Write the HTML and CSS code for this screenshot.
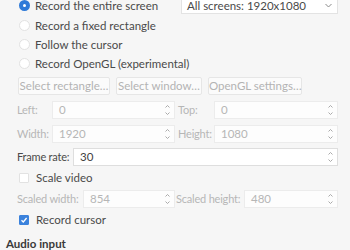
FILE: index.html
```html
<!DOCTYPE html>
<html lang="en">
<head>
    <meta charset="UTF-8">
    <meta name="viewport" content="width=device-width, initial-scale=1.0">
    <title>Video input</title>
    <link rel="stylesheet" href="styles.css">
</head>
<body>
    <div class="page">
        <div class="mode">
            <div class="radios">
                <label class="radio checked"><span class="mark"></span>Record the entire screen</label>
                <label class="radio"><span class="mark"></span>Record a fixed rectangle</label>
                <label class="radio"><span class="mark"></span>Follow the cursor</label>
                <label class="radio"><span class="mark"></span>Record OpenGL (experimental)</label>
            </div>
            <div class="combo">
                <span>All screens: 1920x1080</span>
                <svg width="7" height="5" viewBox="0 0 7 5"><path d="M0.5 1 L3.5 4 L6.5 1" fill="none" stroke="#8a8a8a" stroke-width="1"/></svg>
            </div>
        </div>

        <div class="buttons">
            <button class="btn btn-rect" disabled>Select rectangle…</button>
            <button class="btn btn-win" disabled>Select window…</button>
            <button class="btn btn-gl" disabled>OpenGL settings…</button>
        </div>

        <div class="geom">
            <span class="lbl off">Left:</span>
            <div class="spin off"><span>0</span><i class="arrows"></i></div>
            <span class="lbl off">Top:</span>
            <div class="spin off"><span>0</span><i class="arrows"></i></div>
        </div>
        <div class="geom">
            <span class="lbl off">Width:</span>
            <div class="spin off"><span>1920</span><i class="arrows"></i></div>
            <span class="lbl off">Height:</span>
            <div class="spin off"><span>1080</span><i class="arrows"></i></div>
        </div>

        <div class="framerate">
            <span class="lbl">Frame rate:</span>
            <div class="spin on"><span>30</span><i class="arrows"></i></div>
        </div>

        <label class="check"><span class="box"></span>Scale video</label>

        <div class="geom scaled">
            <span class="lbl off">Scaled width:</span>
            <div class="spin off"><span>854</span><i class="arrows"></i></div>
            <span class="lbl off">Scaled height:</span>
            <div class="spin off"><span>480</span><i class="arrows"></i></div>
        </div>

        <label class="check checked"><span class="box"></span>Record cursor</label>

        <h3>Audio input</h3>
    </div>
</body>
</html>
```

FILE: styles.css
```css
body {
    margin: 0;
    background: #f6f6f6;
    font-family: Lato, sans-serif;
    font-size: 11.5px;
    color: #4a4a4a;
    overflow: hidden;
}

.page {
    margin-top: -6px;
    padding: 0 12px 0 17px;
}

.mode {
    display: grid;
    grid-template-columns: 164px 1fr;
}

.radios {
    padding-top: 2.33px;
}

.radio {
    display: flex;
    align-items: center;
    height: 19.33px;
    padding-left: 2px;
    white-space: nowrap;
}

.radio .mark {
    flex-shrink: 0;
    width: 11px;
    height: 11px;
    box-sizing: border-box;
    border-radius: 50%;
    border: 1px solid #e2e2e2;
    background-color: #ffffff;
    margin-right: 5px;
}

.radio.checked .mark {
    border: 4px solid #2f7ad8;
    background-color: #ffffff;
}

.combo {
    height: 20px;
    box-sizing: border-box;
    border: 1px solid #e3e3e3;
    background: #fff;
    display: flex;
    align-items: center;
    justify-content: space-between;
    padding: 3px 5px 0 5px;
    color: #4a4a4a;
    white-space: nowrap;
}

.buttons {
    display: flex;
    gap: 6px;
    margin-top: 3.33px;
    padding-left: 1px;
}

.btn {
    height: 18px;
    font: inherit;
    color: #b3b3b3;
    background: #fbfbfb;
    border: 1px solid #e6e6e6;
    border-radius: 2px;
    padding: 0;
    white-space: nowrap;
}

.btn-rect { width: 92px; }
.btn-win { width: 86px; }
.btn-gl { width: 94px; }

.geom {
    display: grid;
    grid-template-columns: 35px 123px 39px 1fr;
    align-items: center;
    margin-top: 6px;
}

.geom .lbl:nth-child(3) {
    margin-left: 3px;
}

.scaled {
    grid-template-columns: 66px 92px 69px 1fr;
}

.scaled .lbl:nth-child(3) {
    margin-left: 1px;
}

.lbl {
    white-space: nowrap;
    font-size: 11px;
    letter-spacing: -0.2px;
}

.off {
    color: #b6b6b6;
}

.spin {
    height: 18px;
    box-sizing: border-box;
    border: 1px solid #ececec;
    background: #fdfdfd;
    display: flex;
    align-items: center;
    justify-content: space-between;
    padding-left: 6px;
}

.spin.on {
    background: #fff;
    border-color: #dedede;
    color: #3f3f3f;
}

.arrows {
    width: 5px;
    height: 12px;
    margin-right: 4px;
    background:
        url("data:image/svg+xml,%3Csvg xmlns='http://www.w3.org/2000/svg' width='5' height='12'%3E%3Cpath d='M0.5 3.5 L2.5 1.5 L4.5 3.5 M0.5 8.5 L2.5 10.5 L4.5 8.5' fill='none' stroke='%23a0a0a0' stroke-width='0.9'/%3E%3C/svg%3E") no-repeat;
}

.framerate {
    display: grid;
    grid-template-columns: 56px 1fr;
    align-items: center;
    margin-top: 5px;
}

.check {
    display: flex;
    align-items: center;
    height: 12px;
    margin-top: 6px;
    padding-left: 2px;
}

.check .box {
    flex-shrink: 0;
    width: 8px;
    height: 8px;
    border: 1px solid #e2e2e2;
    background: #fff;
    border-radius: 1px;
    margin-right: 7px;
}

.check.checked .box {
    border-color: #3b82dc;
    background: #3b82dc url("data:image/svg+xml,%3Csvg xmlns='http://www.w3.org/2000/svg' width='8' height='8'%3E%3Cpath d='M1.5 4.2 L3.3 6 L6.6 2' fill='none' stroke='white' stroke-width='1.3'/%3E%3C/svg%3E") no-repeat center;
}

h3 {
    margin: 11px 0 0 -11px;
    font-size: 11.5px;
    font-weight: bold;
    color: #3a3a3a;
}
```
